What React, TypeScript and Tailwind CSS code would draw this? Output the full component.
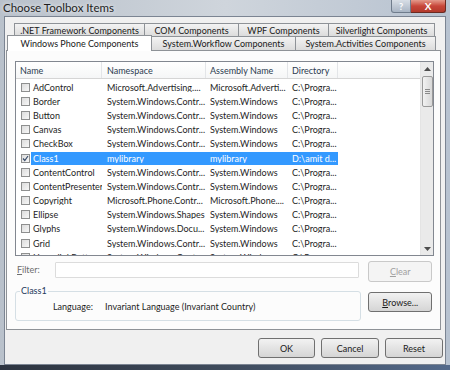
import React from "react";

type Row = { name: string; ns: string; asm: string; dir: string; checked?: boolean; selected?: boolean };

const rows: Row[] = [
  { name: "AdControl", ns: "Microsoft.Advertising....", asm: "Microsoft.Adverti...", dir: "C:\\Progra..." },
  { name: "Border", ns: "System.Windows.Contr...", asm: "System.Windows", dir: "C:\\Progra..." },
  { name: "Button", ns: "System.Windows.Contr...", asm: "System.Windows", dir: "C:\\Progra..." },
  { name: "Canvas", ns: "System.Windows.Contr...", asm: "System.Windows", dir: "C:\\Progra..." },
  { name: "CheckBox", ns: "System.Windows.Contr...", asm: "System.Windows", dir: "C:\\Progra..." },
  { name: "Class1", ns: "mylibrary", asm: "mylibrary", dir: "D:\\amit d...", checked: true, selected: true },
  { name: "ContentControl", ns: "System.Windows.Contr...", asm: "System.Windows", dir: "C:\\Progra..." },
  { name: "ContentPresenter", ns: "System.Windows.Contr...", asm: "System.Windows", dir: "C:\\Progra..." },
  { name: "Copyright", ns: "Microsoft.Phone.Contr...", asm: "Microsoft.Phone....", dir: "C:\\Progra..." },
  { name: "Ellipse", ns: "System.Windows.Shapes", asm: "System.Windows", dir: "C:\\Progra..." },
  { name: "Glyphs", ns: "System.Windows.Docu...", asm: "System.Windows", dir: "C:\\Progra..." },
  { name: "Grid", ns: "System.Windows.Contr...", asm: "System.Windows", dir: "C:\\Progra..." },
  { name: "HyperlinkButton", ns: "System.Windows.Contr...", asm: "System.Windows", dir: "C:\\Progra..." },
];

const tab = "flex items-center justify-center whitespace-nowrap border border-[#8e9297] bg-gradient-to-b from-[#f3f3f3] to-[#dcdcdc] text-[#1a1a1a] -ml-px first:ml-0";

const btn = "flex items-center justify-center whitespace-nowrap rounded-[3px] border border-[#707070] bg-gradient-to-b from-[#f2f2f2] to-[#d5d5d5] text-[#1a1a1a]";

function Check({ on }: { on?: boolean }) {
  return (
    <div className="w-[9px] h-[9px] border border-[#8e8f8f] bg-gradient-to-br from-[#dcdcdc] to-[#f7f7f7] flex items-center justify-center shrink-0">
      {on && (
        <svg width="7" height="7" viewBox="0 0 7 7">
          <path d="M1 3.5 L2.8 5.5 L6 1" stroke="#3a4d6b" strokeWidth="1.2" fill="none" />
        </svg>
      )}
    </div>
  );
}

export default function App() {
  return (
    <div className="w-[450px] h-[370px] overflow-hidden flex flex-col bg-gradient-to-r from-[#b9c1cb] via-[#cfd5dc] to-[#b7c2d0] font-['Lato','Liberation_Sans',sans-serif] text-[9px] leading-none">
      {/* title bar */}
      <div className="h-[16px] flex items-start shrink-0">
        <div className="pl-[3px] pt-[2px] text-[11.5px] text-[#1e1e1e] whitespace-nowrap [text-shadow:0_0_4px_#fff]">Choose Toolbox Items</div>
        <div className="ml-auto mr-[4px] flex">
          <div className="w-[20px] h-[13px] rounded-bl-[3px] border border-[#6f7c8c] border-t-0 bg-gradient-to-b from-[#d8dee6] to-[#a9b5c4] text-[#ffffff] text-[9px] font-bold flex items-center justify-center">?</div>
          <div className="w-[35px] h-[13px] rounded-br-[3px] border border-[#6b2a22] border-t-0 border-l-0 bg-gradient-to-b from-[#e39a8c] via-[#c7463a] to-[#b23a2c] text-white text-[10px] font-bold flex items-center justify-center">X</div>
        </div>
      </div>

      {/* window body */}
      <div className="mx-[4px] h-[349px] bg-[#f0f0f0] border border-[#7b8492] shrink-0 flex flex-col">
        {/* tabs */}
        <div className="pt-[6px] flex flex-col">
          <div className="flex ml-[9px] h-[14px]">
            <div className={`${tab} w-[131px]`}>.NET Framework Components</div>
            <div className={`${tab} w-[95px]`}>COM Components</div>
            <div className={`${tab} w-[91px]`}>WPF Components</div>
            <div className={`${tab} w-[107px]`}>Silverlight Components</div>
          </div>
          <div className="flex ml-[2px] h-[15px] -mt-px items-end relative z-10">
            <div className="w-[145px] h-[16px] border border-[#8e9297] border-b-0 bg-white flex items-center justify-center whitespace-nowrap text-[#1a1a1a]">Windows Phone Components</div>
            <div className={`${tab} w-[145px] h-[15px] -ml-px`}>System.Workflow Components</div>
            <div className={`${tab} w-[141px] h-[15px]`}>System.Activities Components</div>
          </div>
        </div>

        {/* tab page */}
        <div className="ml-[1px] w-[435px] h-[280px] -mt-px border border-[#8e9297] bg-[#fcfcfc] flex flex-col px-[8px] pt-[10px]">
          {/* list view */}
          <div className="w-[419px] h-[195px] border border-[#828790] bg-white flex overflow-hidden">
            <div className="flex-1 flex flex-col overflow-hidden">
              <div className="h-[17px] flex shrink-0 text-[#2c3b50] bg-gradient-to-b from-white to-[#f5f6f7] border-b border-[#d5d5d5]">
                <div className="w-[86px] pl-[4px] flex items-center border-r border-[#e3e5e8]">Name</div>
                <div className="w-[104px] pl-[5px] flex items-center border-r border-[#e3e5e8]">Namespace</div>
                <div className="w-[82px] pl-[4px] flex items-center border-r border-[#e3e5e8]">Assembly Name</div>
                <div className="w-[50px] pl-[4px] flex items-center border-r border-[#e3e5e8]">Directory</div>
                <div className="flex-1" />
              </div>
              <div className="flex flex-col pt-[1px]">
                {rows.map((r) => (
                  <div key={r.name} className="h-[14.2px] flex items-center shrink-0 text-[#1e1e1e]">
                    <div className="w-[15px] pl-[5px] flex items-center">
                      <Check on={r.checked} />
                    </div>
                    <div className={`flex items-center h-[13px] ${r.selected ? "bg-[#3399ff] text-white" : ""}`}>
                      <div className="w-[71px] pl-[2px] whitespace-nowrap overflow-hidden">{r.name}</div>
                      <div className="w-[104px] pl-[5px] whitespace-nowrap overflow-hidden">{r.ns}</div>
                      <div className="w-[82px] pl-[4px] whitespace-nowrap overflow-hidden">{r.asm}</div>
                      <div className="w-[50px] pl-[4px] whitespace-nowrap overflow-hidden">{r.dir}</div>
                    </div>
                  </div>
                ))}
              </div>
            </div>
            {/* scrollbar */}
            <div className="w-[13px] bg-[#eaeaea] border-l border-[#e4e4e4] flex flex-col items-center shrink-0">
              <div className="h-[13px] flex items-center justify-center">
                <svg width="7" height="4" viewBox="0 0 7 4"><path d="M0 4 L3.5 0 L7 4 Z" fill="#4d4d4d" /></svg>
              </div>
              <div className="mt-[1px] w-[11px] h-[31px] rounded-[2px] border border-[#9a9a9a] bg-gradient-to-r from-[#f2f2f2] to-[#d8d8d8] flex flex-col items-center justify-center gap-[1px]">
                <div className="w-[5px] h-px bg-[#8a8a8a]" />
                <div className="w-[5px] h-px bg-[#8a8a8a]" />
                <div className="w-[5px] h-px bg-[#8a8a8a]" />
              </div>
              <div className="mt-auto h-[13px] flex items-center justify-center">
                <svg width="7" height="4" viewBox="0 0 7 4"><path d="M0 0 L7 0 L3.5 4 Z" fill="#4d4d4d" /></svg>
              </div>
            </div>
          </div>

          {/* filter row */}
          <div className="flex items-start mt-[5px]">
            <div className="w-[40px] pl-[2px] pt-[4px] text-[#6d6d6d]">
              <span className="underline">F</span>ilter:
            </div>
            <div className="mt-[1px] w-[307px] h-[16px] border border-[#dcdcdc] bg-white rounded-[1px]" />
            <div className="ml-[9px] w-[64px] h-[21px] rounded-[3px] border border-[#c9c9c9] bg-[#f4f4f4] text-[#a0a0a0] flex items-center justify-center">
              <span className="underline">C</span>lear
            </div>
          </div>

          {/* group + browse */}
          <div className="flex items-start mt-[6px]">
            <div className="relative w-[349px] h-[30px] mt-[3px] border border-[#d5dfe5] rounded-[3px]">
              <div className="absolute -top-[6px] left-[4px] px-[1px] bg-[#fcfcfc] text-[#1e395b]">Class1</div>
              <div className="flex pt-[10px] text-[#1e1e1e] whitespace-nowrap">
                <div className="pl-[37px] w-[89px]">Language:</div>
                <div>Invariant Language (Invariant Country)</div>
              </div>
            </div>
            <div className={`${btn} ml-[7px] mt-[4px] w-[64px] h-[20px]`}>
              <span className="underline">B</span>rowse...
            </div>
          </div>
        </div>

        {/* dialog buttons */}
        <div className="flex mt-[8px] pl-[253px] gap-[6px]">
          <div className={`${btn} w-[57px] h-[20px] border-[#3c7fb1] from-[#eaf6fd] to-[#bee6fd]`}>OK</div>
          <div className={`${btn} w-[58px] h-[20px]`}>Cancel</div>
          <div className={`${btn} w-[58px] h-[20px]`}>Reset</div>
        </div>
      </div>
      <div className="flex-1 bg-gradient-to-r from-[#2d3440] via-[#3f4b5c] to-[#53698a]" />
    </div>
  );
}
